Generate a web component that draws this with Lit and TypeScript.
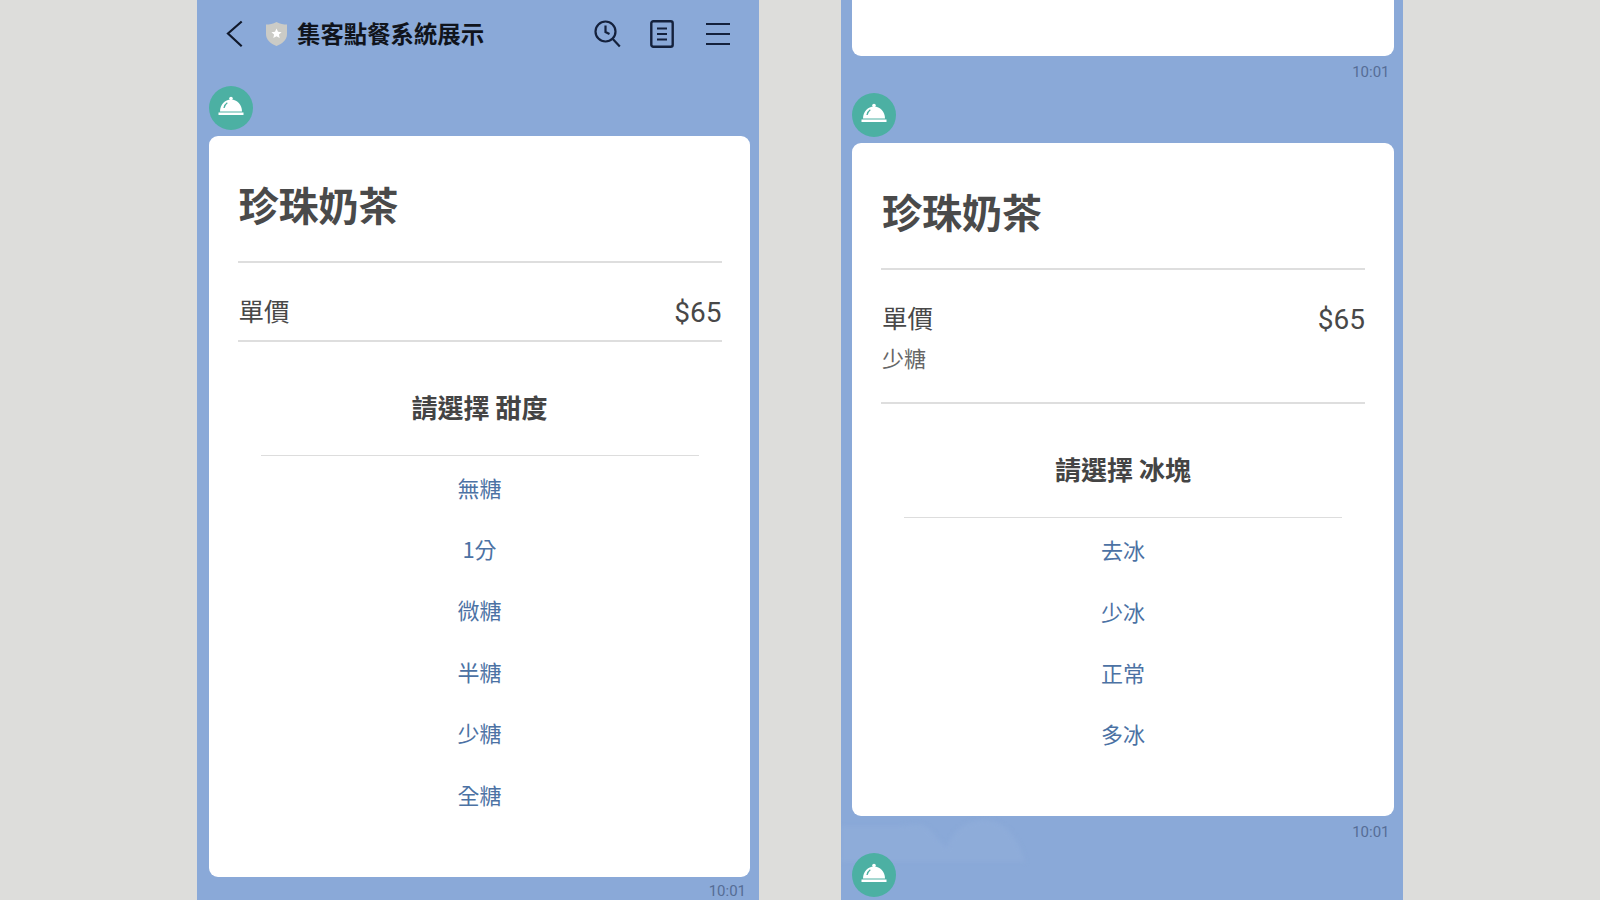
import { LitElement, html, css, svg } from "lit";
import { customElement, property } from "lit/decorators.js";
import { classMap } from "lit/directives/class-map.js";

const bell = svg`<svg width="44" height="44" viewBox="0 0 44 44">
  <circle cx="22" cy="12.5" r="1.8" fill="#fff"/>
  <path d="M11 25.5c0-6.6 4.9-12 11-12s11 5.400 11 12z" fill="#fff"/>
  <path d="M15 22c.4-2.200 1.600-4 3.300-5.200" fill="none" stroke="#4cb0a3" stroke-width="1.300"/>
  <rect x="9.500" y="26.500" width="25" height="2.500" fill="#fff"/>
</svg>`;

@customElement("order-card")
class OrderCard extends LitElement {
  @property() heading = "";
  @property() note = "";
  @property({ type: Array }) options: string[] = [];
  static styles = css`
    :host { display: block; }
    .card { margin-left: 11.500px; width: 541.500px; background: #fff; border-radius: 9px; padding: 0 28.500px 52.500px 29px; box-sizing: border-box; color: #444; font-family: "Noto Sans CJK TC", sans-serif; }
    .card.noted { padding-bottom: 52px; }
    .title { padding: 43.500px 0 0 1px; font-size: 40px; line-height: 48px; font-weight: 700; color: #4a4a4a; height: 125px; box-sizing: border-box; }
    .rule { height: 2px; background: #dedede; }
    .row { display: flex; justify-content: space-between; align-items: center; padding: 31px 0 0 1px; height: 36px; font-size: 25.500px; color: #484848; box-sizing: content-box; }
    .label { position: relative; top: -3px; }
    .price { font-family: Roboto, sans-serif; font-size: 28px; }
    .note { padding: 4px 0 0 1px; font-size: 22px; line-height: 32px; color: #666; }
    .spacer { height: 10px; }
    .note + .spacer { height: 29px; }
    .choose { padding: 47px 0 30px; text-align: center; font-size: 26px; line-height: 36px; font-weight: 700; color: #444; }
    .thin { height: 1px; background: #dddddd; margin: 0 23px; }
    .opt { height: 61.400px; display: flex; align-items: center; justify-content: center; font-size: 22px; color: #4c72a4; }
  `;
  render() {
    return html`<div class=${classMap({ card: true, noted: !!this.note })}>
      <div class="title">珍珠奶茶</div>
      <div class="rule"></div>
      <div class="row"><span class="label">單價</span><span class="price">$65</span></div>
      ${this.note ? html`<div class="note">${this.note}</div>` : ""}
      <div class="spacer"></div>
      <div class="rule"></div>
      <div class="choose">${this.heading}</div>
      <div class="thin"></div>
      <div class="options">${this.options.map((o) => html`<div class="opt">${o}</div>`)}</div>
    </div>`;
  }
}

@customElement("app-root")
class AppRoot extends LitElement {
  static styles = css`
    :host { display: block; height: 900px; overflow: hidden; background: #dddddb; }
    .page { display: flex; gap: 81.500px; padding-left: 197px; height: 900px; }
    .phone { position: relative; width: 562px; height: 900px; background: #8aa9d8; overflow: hidden; flex: none; }
    .bg { position: absolute; left: 0; top: 0; filter: blur(2px); }
    .content { position: relative; }
    .header { display: flex; align-items: center; height: 68px; color: #111; font-family: "Noto Sans CJK TC", sans-serif; }
    .back { margin-left: 29px; }
    .shield { margin-left: 23px; }
    .name { margin-left: 10px; font-size: 23.400px; font-weight: 700; color: #10141c; white-space: nowrap; position: relative; top: -1px; }
    .search { margin-left: 110px; }
    .doc { margin-left: 28px; }
    .menu { margin-left: 32px; }
    svg { display: block; flex: none; }
    .avatar { width: 44px; height: 44px; border-radius: 50%; background: #4cb0a3; margin-left: 11.500px; }
    .first { margin-top: 18px; margin-bottom: 6px; }
    .next { margin-top: 14.800px; margin-bottom: 6px; }
    .last { margin-top: 13.800px; }
    .stub { margin-left: 11.500px; width: 541.500px; height: 56px; background: #fff; border-radius: 0 0 9px 9px; }
    .time { height: 14px; padding: 8.700px 13px 0 0; text-align: right; font-family: Roboto, sans-serif; font-size: 15px; line-height: 14px; color: #566d96; }
    .time.tight { padding-top: 7px; }
  `;
  render() {
    return html`<div class="page">
      <div class="phone">
        <div class="content">
          <div class="header">
            <svg class="back" width="17" height="28" viewBox="0 0 17 28"><path d="M15.700 1.500 2 13.500l13.700 12.800" fill="none" stroke="#10182a" stroke-width="2.200"/></svg>
            <svg class="shield" width="21" height="24" viewBox="0 0 21 24">
              <path d="M10.500 0C7 2 3.500 2.500 0 2.500V12c0 6 4.500 9.500 10.500 12C16.500 21.500 21 18 21 12V2.500C17.500 2.500 14 2 10.500 0z" fill="#cbcbc6"/>
              <path d="m10.500 6.500 1.500 3.300 3.600.4-2.700 2.400.8 3.500-3.200-1.800-3.200 1.800.8-3.500-2.700-2.400 3.600-.4z" fill="#fff"/>
            </svg>
            <div class="name">集客點餐系統展示</div>
            <svg class="search" width="28" height="28" viewBox="0 0 28 28">
              <circle cx="11.500" cy="11.500" r="10" fill="none" stroke="#14213c" stroke-width="2.200"/>
              <path d="M11.500 5.500v6.500l4 2M18.800 19l7 7.500" fill="none" stroke="#14213c" stroke-width="2.200"/>
            </svg>
            <svg class="doc" width="24" height="28" viewBox="0 0 24 28">
              <rect x="1.300" y="1.300" width="21.400" height="25.400" rx="2" fill="none" stroke="#14213c" stroke-width="2.400"/>
              <path d="M7 8.500h10M7 14h10M7 19.500h10" stroke="#14213c" stroke-width="2.200"/>
            </svg>
            <svg class="menu" width="24" height="24" viewBox="0 0 24 24">
              <path d="M0 2h24M0 12h24M0 22h24" stroke="#14213c" stroke-width="2.200"/>
            </svg>
          </div>
          <div class="avatar first">${bell}</div>
          <order-card heading="請選擇 甜度" .options=${["無糖", "1分", "微糖", "半糖", "少糖", "全糖"]}></order-card>
          <div class="time tight">10:01</div>
        </div>
      </div>
      <div class="phone">
        <svg class="bg" width="562" height="900" viewBox="0 0 562 900">
          <path d="M0 862V826h60c8 0 14-4 24 0 6 2 12 14 22 22 6-22 28-30 40-28 20 2 32 20 38 42z" fill="#8eacd9"/>
        </svg>
        <div class="content">
          <div class="stub"></div>
          <div class="time">10:01</div>
          <div class="avatar next">${bell}</div>
          <order-card heading="請選擇 冰塊" note="少糖" .options=${["去冰", "少冰", "正常", "多冰"]}></order-card>
          <div class="time">10:01</div>
          <div class="avatar last">${bell}</div>
        </div>
      </div>
    </div>`;
  }
}
